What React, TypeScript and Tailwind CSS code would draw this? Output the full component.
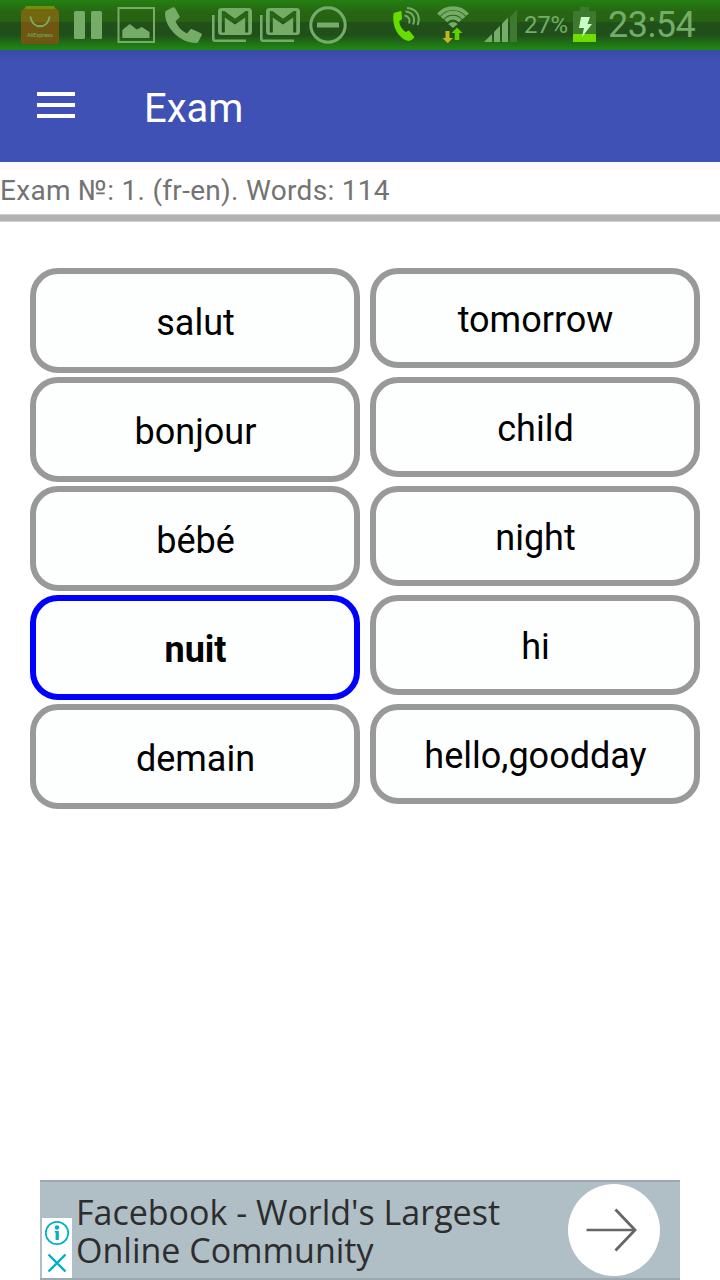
import type { ReactNode } from "react";
import clsx from "clsx";

type Word = {
  text: string;
  selected?: boolean;
};

const SOURCE_WORDS: Word[] = [
  { text: "salut" },
  { text: "bonjour" },
  { text: "bébé" },
  { text: "nuit", selected: true },
  { text: "demain" },
];

const TARGET_WORDS: Word[] = [
  { text: "tomorrow" },
  { text: "child" },
  { text: "night" },
  { text: "hi" },
  { text: "hello,goodday" },
];

type IconProps = {
  width: number;
  className?: string;
  children: ReactNode;
};

// Status icons share the bar's full height, so y is measured from its top.
function StatusIcon({ width, className, children }: IconProps) {
  return (
    <svg
      width={width}
      height={50}
      viewBox={`0 0 ${width} 50`}
      className={clsx("shrink-0", className)}
      fill="currentColor"
      aria-hidden
    >
      {children}
    </svg>
  );
}

function GmailIcon({ className }: { className?: string }) {
  return (
    <StatusIcon width={40} className={className}>
      <path d="M0 15h2.6v24.4H34V42H3a3 3 0 0 1-3-3z" />
      <path
        fillRule="evenodd"
        d="M9.500 8h27A3.500 3.500 0 0 1 40 11.500v20a3.500 3.500 0 0 1-3.500 3.500h-27A3.500 3.500 0 0 1 6 31.500v-20A3.500 3.500 0 0 1 9.500 8zM9.800 11v21.500h3V17.500L23 24.500l10.200-7v15h3V11h-2.600L23 18.800 12.400 11z"
      />
    </StatusIcon>
  );
}

function StatusBar() {
  return (
    <div className="flex h-[50px] shrink-0 items-center bg-[linear-gradient(to_bottom,#238012_0px,#286512_12px,#256314_22px,#22501a_22px,#214f19_35px,#1f8014_47px,#1e8813_50px)] pl-[21px] text-[#74ac68]">
      <StatusIcon width={38}>
        <path d="M5 6h28l3 5H2z" fill="#6f9008" />
        <rect y="9" width="38" height="35" rx="4" fill="#73680f" />
        <path d="M0 22h38v18a4 4 0 0 1-4 4H4a4 4 0 0 1-4-4z" fill="#705711" />
        <path d="M9.500 16.500c1 13 18 13 19 0" fill="none" stroke="#74ac68" strokeWidth="1.800" />
        <text x="19" y="37" textAnchor="middle" fontSize="5.800" fontFamily="Roboto, sans-serif" textLength="26">
          AliExpress
        </text>
      </StatusIcon>
      <StatusIcon width={28} className="ml-[15px]">
        <rect y="11" width="11" height="28" rx="1.500" />
        <rect x="17" y="11" width="11" height="28" rx="1.500" />
      </StatusIcon>
      <StatusIcon width={38} className="ml-[15px]">
        <rect x="1.500" y="8" width="35.500" height="34" fill="none" stroke="currentColor" strokeWidth="2" />
        <path d="M5.300 38v-8l7.500-6 7 5.500 5-2.500 7.700 5v6z" />
      </StatusIcon>
      <StatusIcon width={37} className="ml-[10px]">
        <path d="M1.500 10.500L8 7.300c1-.4 1.500 0 2 .800l4.500 8c.4.800.2 1.300-.4 1.900l-3.600 3.200c2 5.500 6 9.600 11.500 12.300l3.300-4c.6-.7 1.200-.7 2-.3l8.700 4c1 .5 1.100 1 .7 2l-3.200 6.300c-.6 1-1.400 1.500-3 1.500C15 43-1 27 .2 12.500c.1-1 .5-1.500 1.300-2z" />
      </StatusIcon>
      <GmailIcon className="ml-[10px]" />
      <GmailIcon className="ml-[8px]" />
      <StatusIcon width={38} className="ml-[9px]">
        <circle cx="19" cy="25" r="17.200" fill="none" stroke="currentColor" strokeWidth="3" />
        <rect x="8" y="22.500" width="22" height="5" />
      </StatusIcon>

      <StatusIcon width={28} className="ml-[46px]">
        <path
          fill="#66dc00"
          d="M.7 13L7.500 11c.5-.1.900.1 1 .7l.5 7.300-2.800 2.500c.5 4.500 2.800 8 6.500 10.500l3.300-1.500 5.500 6.500c-1.500 2-3.500 3.800-6 4C8 40-2 29 .7 13z"
        />
        <path
          d="M11.500 15.500c4 .5 6 4 4.500 8M12.500 11.500c7 .5 10.500 6.500 7.500 13M14 8c10 .5 14 8.500 10.500 17"
          fill="none"
          stroke="currentColor"
          strokeWidth="2"
        />
      </StatusIcon>
      <StatusIcon width={34} className="ml-[15px]">
        <path
          d="M2.500 16.300A19 19 0 0 1 31.500 16.300M6.100 19.400A14.200 14.200 0 0 1 27.900 19.400M9.800 22.500A9.400 9.400 0 0 1 24.200 22.500"
          fill="none"
          stroke="currentColor"
          strokeWidth="3.900"
          transform="translate(0 -1.500)"
        />
        <path d="M12.200 24q4.800-4 9.600 0L17 28z" />
        <path d="M9.500 31h4v7h3.500l-5.300 5.200L6.500 38h3z" fill="#c3b522" />
        <path d="M18.700 40v-7h-3.200l5.500-5.500 5.500 5.500h-3.200v7z" fill="#5fd000" />
      </StatusIcon>
      <StatusIcon width={33} className="ml-[14px]">
        <path d="M26 17l7-7.500V42h-7z" fill="#3d7a30" />
        <path d="M0 42l8-8v8zM10 32l6-6.300V42h-6zM18 23.700l6-6.200V42h-6z" />
      </StatusIcon>
      <span className="ml-[7px] w-[45px] pt-px text-2xl leading-[49px] tracking-[-0.3px] whitespace-nowrap">
        27%
      </span>
      <StatusIcon width={23} className="ml-[4px]">
        <path d="M7 7h9v4h7v31H0V11h7z" fill="#3d7a30" />
        <path d="M0 34h23v8H0z" fill="#70dd00" />
        <path d="M8 17h9l-2.500 7H19L9 37l2-9H6z" fill="#c9ffc5" />
      </StatusIcon>
      <span className="ml-[12px] text-4xl leading-[50px] tracking-[-0.5px] whitespace-nowrap">
        23:54
      </span>
    </div>
  );
}

function WordColumn({ words, target }: { words: Word[]; target?: boolean }) {
  return (
    <ul className={clsx("flex w-[330px] flex-col", target ? "gap-[9px]" : "gap-1")}>
      {words.map((word) => (
        <li
          key={word.text}
          className={clsx(
            "flex items-center justify-center rounded-[28px] border-6 bg-[#fdfffe] text-4xl text-black",
            target ? "h-[100px]" : "h-[105px]",
            word.selected ? "border-[#0000ff] font-bold" : "border-[#999999]",
          )}
        >
          <span className="pt-1 pl-px">{word.text}</span>
        </li>
      ))}
    </ul>
  );
}

function AdBanner() {
  return (
    <aside className="mx-auto flex h-[100px] w-[640px] border-y-2 border-[#9caaaf] bg-[#b0bec5]">
      <div className="mt-auto ml-[2px] flex h-[60px] w-[30px] flex-col items-center bg-white">
        <svg width="30" height="60" viewBox="0 0 30 60" fill="none" stroke="#00aecd" aria-hidden>
          <circle cx="15" cy="15" r="11.200" strokeWidth="1.700" />
          <circle cx="15" cy="9.500" r="2.200" fill="#00aecd" stroke="none" />
          <path d="M12.800 13h4v9h-3.200v-7.500h-.8z" fill="#00aecd" stroke="none" />
          <path d="M6.500 36.500l17 17M23.500 36.500l-17 17" strokeWidth="2.400" />
        </svg>
      </div>
      <p className="ml-1 w-[470px] pt-[11px] font-['Open_Sans','Noto_Sans',sans-serif] text-[34px] leading-[38px] whitespace-nowrap text-[#2d2d2d]">
        Facebook - World's Largest
        <br />
        Online Community
      </p>
      <div className="mt-[2px] mr-5 ml-auto flex size-[92px] items-center justify-center rounded-full bg-white">
        <svg width="56" height="46" viewBox="0 0 56 46" fill="none" stroke="#666" strokeWidth="2.400" aria-hidden>
          <path d="M.5 23H49" />
          <path d="M29.500 2.500L49 23 29.500 43.500" strokeWidth="2.800" />
        </svg>
      </div>
    </aside>
  );
}

export default function App() {
  return (
    <div className="flex h-[1280px] w-[720px] flex-col overflow-hidden bg-white font-[Roboto,sans-serif]">
      <StatusBar />
      <header className="flex h-28 shrink-0 items-center bg-[linear-gradient(to_bottom,#3b4aa6_0px,#3f51b5_12px)] text-white">
        <button className="mb-[2px] ml-[37px] flex w-[38px] flex-col gap-[7px]" aria-label="Menu">
          <span className="h-1 bg-white" />
          <span className="h-1 bg-white" />
          <span className="h-1 bg-white" />
        </button>
        <h1 className="ml-[69px] pt-1.5 text-[40px] leading-none">Exam</h1>
      </header>
      <div className="h-[52px] shrink-0 border-t-8 border-[#fafafa]">
        <p className="pt-[3px] text-[28px] leading-9 tracking-[0.3px] whitespace-nowrap text-[#737373]">
          Exam №: 1. (fr-en). Words: 114
        </p>
      </div>
      <div className="h-2 shrink-0 border-y border-[#cfcfcf] bg-[#b2b2b2]" />
      <main className="flex gap-[10px] pt-[46px] pl-[30px]">
        <WordColumn words={SOURCE_WORDS} />
        <WordColumn words={TARGET_WORDS} target />
      </main>
      <div className="mt-auto">
        <AdBanner />
      </div>
    </div>
  );
}
